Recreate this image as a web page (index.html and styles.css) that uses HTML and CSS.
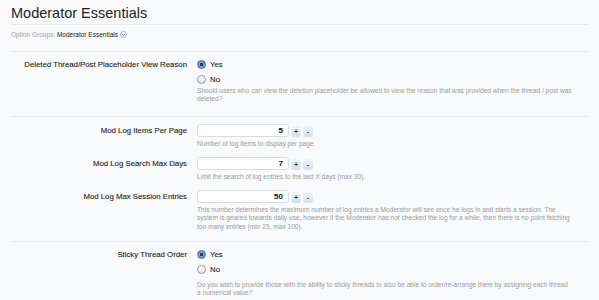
FILE: index.html
```html
<!DOCTYPE html>
<html lang="en">
<head>
    <meta charset="UTF-8">
    <title>Moderator Essentials</title>
    <link rel="stylesheet" href="styles.css">
</head>
<body>
    <div class="page">
        <h1 class="title">Moderator Essentials</h1>
        <div class="groups">
            Option Groups: <span class="group-name">Moderator Essentials</span>
            <span class="group-menu">
                <svg width="7" height="7" viewBox="0 0 7 7"><circle cx="3.5" cy="3.5" r="3" fill="#fff" stroke="#9aa4ad" stroke-width="0.8"/><path d="M2 2.8 L3.5 4.4 L5 2.8" fill="none" stroke="#555" stroke-width="0.9"/></svg>
            </span>
        </div>

        <!-- placeholder reason -->
        <div class="section">
            <div class="row">
                <div class="label label-radio">Deleted Thread/Post Placeholder View Reason</div>
                <div class="control">
                    <label class="choice"><span class="radio checked"></span>Yes</label>
                    <label class="choice"><span class="radio"></span>No</label>
                    <p class="explain">Should users who can view the deletion placeholder be allowed to view the reason that was provided when the thread / post was deleted?</p>
                </div>
            </div>
        </div>

        <!-- mod log -->
        <div class="section section-numbers">
            <div class="row">
                <div class="label label-input">Mod Log Items Per Page</div>
                <div class="control">
                    <div class="spinbox">
                        <input type="text" class="number" value="5">
                        <span class="spin">+</span><span class="spin">-</span>
                    </div>
                    <p class="explain">Number of log items to display per page.</p>
                </div>
            </div>
            <div class="row">
                <div class="label label-input">Mod Log Search Max Days</div>
                <div class="control">
                    <div class="spinbox">
                        <input type="text" class="number" value="7">
                        <span class="spin">+</span><span class="spin">-</span>
                    </div>
                    <p class="explain">Limit the search of log entries to the last X days (max 30).</p>
                </div>
            </div>
            <div class="row">
                <div class="label label-input">Mod Log Max Session Entries</div>
                <div class="control">
                    <div class="spinbox">
                        <input type="text" class="number" value="50">
                        <span class="spin">+</span><span class="spin">-</span>
                    </div>
                    <p class="explain">This number determines the maximum number of log entries a Moderator will see once he logs in and starts a session. The system is geared towards daily use, however if the Moderator has not checked the log for a while, then there is no point fetching too many entries (min 25, max 100).</p>
                </div>
            </div>
        </div>

        <!-- sticky order -->
        <div class="section">
            <div class="row">
                <div class="label label-radio">Sticky Thread Order</div>
                <div class="control">
                    <label class="choice"><span class="radio checked"></span>Yes</label>
                    <label class="choice"><span class="radio"></span>No</label>
                    <p class="explain explain-wide">Do you wish to provide those with the ability to sticky threads to also be able to order/re-arrange them by assigning each thread a&nbsp;numerical value?</p>
                </div>
            </div>
        </div>
    </div>
</body>
</html>
```

FILE: styles.css
```css
body {
    margin: 0;
    background-color: #f9fafb;
    font-family: "Liberation Sans", Arial, sans-serif;
    color: #222;
}
.page {
    padding: 0 11px;
}
.title {
    margin: 0;
    padding-top: 4px;
    height: 20px;
    font-size: 14.5px;
    font-weight: normal;
    line-height: 18px;
    color: #1e1e1e;
    border-bottom: 1px solid #e3ebf0;
}
.groups {
    height: 26px;
    line-height: 20px;
    font-size: 6.5px;
    color: #a0a0a0;
}
.group-name {
    color: #222;
}
.group-menu svg {
    vertical-align: -1px;
}
.section {
    border-top: 1px solid #e3ebf0;
    padding: 5px 0 12px;
}
.section-numbers {
    padding-bottom: 10px;
}
.row {
    display: grid;
    grid-template-columns: 176px 1fr;
    column-gap: 10px;
    margin-bottom: 7px;
}
.row:last-child {
    margin-bottom: 0;
}
.label {
    text-align: right;
    font-size: 7.8px;
    color: #1a1a1a;
    -webkit-text-stroke: 0.1px #1a1a1a;
}
.label-radio {
    line-height: 15px;
}
.label-input {
    padding-top: 2px;
    line-height: 13px;
}
.control {
    padding-right: 14px;
}
.choice {
    display: flex;
    align-items: center;
    height: 15px;
    font-size: 7.8px;
    color: #1a1a1a;
    -webkit-text-stroke: 0.1px #1a1a1a;
}
.radio {
    width: 7px;
    height: 7px;
    margin-right: 4px;
    border: 1px solid #8e98a2;
    border-radius: 50%;
    background: linear-gradient(#ffffff, #e2e5e8);
}
.radio.checked {
    border-color: #4a6f93;
    background: radial-gradient(circle, #2a3f55 0, #2a3f55 1.4px, #79a9d6 1.9px, #4d86c0 100%);
}
.explain {
    margin: 0;
    font-size: 6.6px;
    line-height: 8.3px;
    color: #9a9a9a;
}
.spinbox + .explain {
    margin-top: 3px;
}
.explain-wide {
    margin-top: 4px;
}
.spinbox {
    display: flex;
    align-items: flex-end;
    height: 13px;
    margin-top: 2px;
    gap: 2px;
}
.number {
    box-sizing: border-box;
    width: 92px;
    height: 13px;
    margin: 0;
    padding: 0 5px 0 0;
    border: 1px solid #d6dce2;
    border-radius: 3px;
    background: #fff;
    text-align: right;
    font-family: "Liberation Sans", Arial, sans-serif;
    font-size: 8px;
    font-weight: bold;
    color: #111;
}
.spin {
    width: 10px;
    height: 11px;
    border-radius: 3px;
    background: linear-gradient(#f1f4f7, #d6dee6);
    text-align: center;
    font-size: 7px;
    font-weight: bold;
    line-height: 11px;
    color: #333;
}
```
